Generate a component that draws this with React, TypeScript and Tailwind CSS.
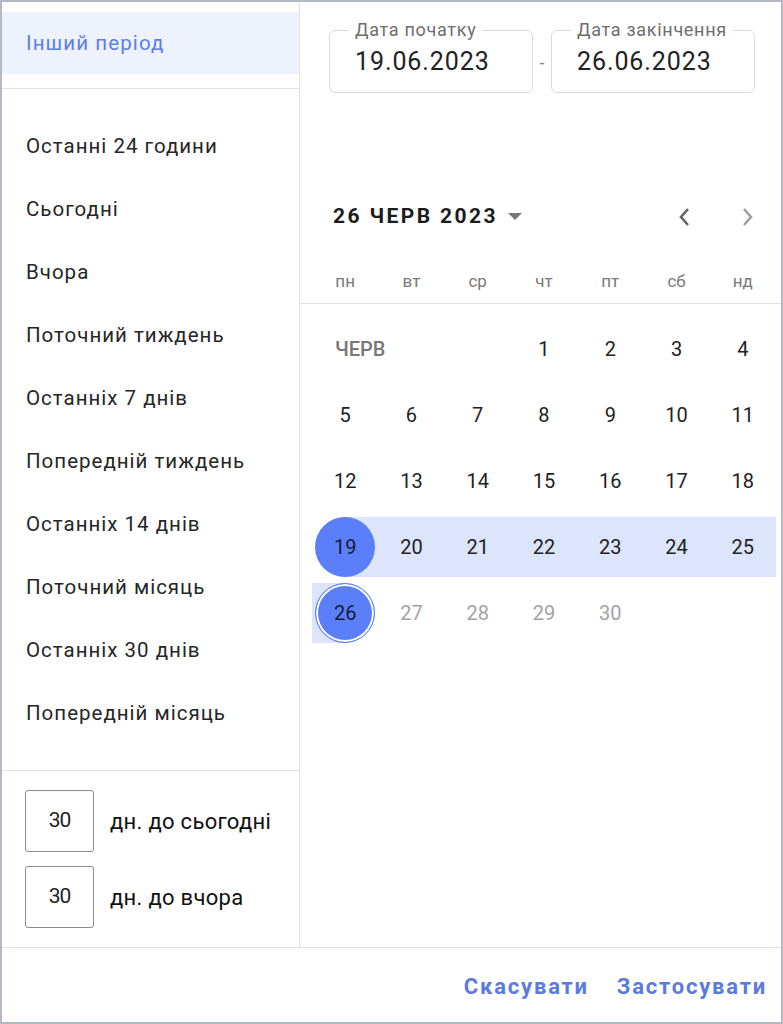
import React from 'react';

const presets = [
  'Останні 24 години',
  'Сьогодні',
  'Вчора',
  'Поточний тиждень',
  'Останніх 7 днів',
  'Попередній тиждень',
  'Останніх 14 днів',
  'Поточний місяць',
  'Останніх 30 днів',
  'Попередній місяць',
];

const weekdays = ['пн', 'вт', 'ср', 'чт', 'пт', 'сб', 'нд'];

type Day = { n: number; kind: 'plain' | 'start' | 'mid' | 'end' | 'off' };

const weeks: Day[][] = [
  [1, 2, 3, 4].map((n) => ({ n, kind: 'plain' as const })),
  [5, 6, 7, 8, 9, 10, 11].map((n) => ({ n, kind: 'plain' as const })),
  [12, 13, 14, 15, 16, 17, 18].map((n) => ({ n, kind: 'plain' as const })),
  [19, 20, 21, 22, 23, 24, 25].map((n) => ({ n, kind: n === 19 ? ('start' as const) : ('mid' as const) })),
  [26, 27, 28, 29, 30].map((n) => ({ n, kind: n === 26 ? ('end' as const) : ('off' as const) })),
];

function DayCell({ day }: { day: Day }) {
  const band =
    day.kind === 'mid'
      ? 'bg-[#dce5fc]'
      : day.kind === 'start'
      ? 'bg-[linear-gradient(to_right,transparent_50%,#dce5fc_50%)]'
      : day.kind === 'end'
      ? 'bg-[linear-gradient(to_right,#dce5fc_50%,transparent_50%)]'
      : '';
  return (
    <div className="h-[66px] flex items-center">
      <div className={`h-[60px] w-full flex items-center justify-center ${band}`}>
        {day.kind === 'start' && (
          <div className="w-[60px] h-[60px] rounded-full bg-[#5a7ff8] flex items-center justify-center text-[#161c3a]">
            {day.n}
          </div>
        )}
        {day.kind === 'end' && (
          <div className="w-[60px] h-[60px] rounded-full bg-[#5a7ff8] border-[1.5px] border-[#5a7ff8] shadow-[inset_0_0_0_2px_white] flex items-center justify-center text-[#161c3a]">
            {day.n}
          </div>
        )}
        {(day.kind === 'plain' || day.kind === 'mid') && <span className="text-[#222]">{day.n}</span>}
        {day.kind === 'off' && <span className="text-[#a3a3a3]">{day.n}</span>}
      </div>
    </div>
  );
}

function DateField({ label, value }: { label: string; value: string }) {
  return (
    <fieldset className="w-[204px] h-[73px] border border-[#dadada] rounded-[6px] pl-[19px] pr-2">
      <legend className="px-[6px] text-[18px] leading-[20px] text-[#6e6e6e] tracking-[0.7px]">{label}</legend>
      <div className="pl-[6px] pt-[7px] text-[25px] leading-[30px] text-[#222] tracking-[0.9px]">{value}</div>
    </fieldset>
  );
}

export default function App() {
  return (
    <div
      className="w-[783px] h-[1024px] border-2 border-[#b5b9c6] bg-white flex flex-col"
      style={{ fontFamily: 'Roboto, "Noto Sans", sans-serif' }}
    >
      <div className="flex flex-1 min-h-0">
        {/* presets */}
        <div className="w-[298px] border-r border-[#e2e2e2] flex flex-col">
          <div className="pt-[10px] pb-[14px] border-b border-[#e2e2e2]">
            <div className="h-[62px] bg-[#eef2fd] flex items-center pl-[24px] text-[20.5px] text-[#5b7fe6] tracking-[1.1px]">
              Інший період
            </div>
          </div>
          <div className="flex-1 pt-[26px]">
            {presets.map((p) => (
              <div key={p} className="h-[63px] flex items-center pl-[24px] text-[20.5px] text-[#262626] tracking-[1px]">
                {p}
              </div>
            ))}
          </div>
          <div className="border-t border-[#e2e2e2] px-[23px] pt-[19px] pb-[19px] flex flex-col gap-[14px]">
            {['дн. до сьогодні', 'дн. до вчора'].map((t) => (
              <div key={t} className="flex items-center gap-[16px]">
                <div className="w-[69px] h-[62px] border border-[#8a8a8a] rounded-[3px] flex items-center justify-center text-[21px] text-[#222] tracking-[-1px]">
                  30
                </div>
                <span className="text-[22px] text-[#111] tracking-[0.3px]">{t}</span>
              </div>
            ))}
          </div>
        </div>

        {/* calendar */}
        <div className="flex-1 flex flex-col">
          <div className="flex items-center pl-[29px] pt-[18px]">
            <DateField label="Дата початку" value="19.06.2023" />
            <span className="w-[18px] text-center text-[18px] text-[#888] mt-[12px]">-</span>
            <DateField label="Дата закінчення" value="26.06.2023" />
          </div>

          <div className="mt-[100px] h-[48px] flex items-center pl-[33px] pr-[26px]">
            <span className="text-[21px] font-bold text-[#1c1c1c] tracking-[2.4px]">26 ЧЕРВ 2023</span>
            <svg width="14" height="8" viewBox="0 0 14 8" className="ml-[10px]">
              <path d="M0 0 L14 0 L7 7 Z" fill="#777" />
            </svg>
            <div className="flex-1" />
            <svg width="14" height="22" viewBox="0 0 14 22" className="mr-[50px]">
              <path d="M11 3 L4 11 L11 19" stroke="#666" strokeWidth="2.6" fill="none" />
            </svg>
            <svg width="14" height="22" viewBox="0 0 14 22">
              <path d="M3 3 L10 11 L3 19" stroke="#a0a0a0" strokeWidth="2.6" fill="none" />
            </svg>
          </div>

          <div className="mt-[19px] h-[44px] border-b border-[#e2e2e2] pl-[12px] pr-[5px] grid grid-cols-7 items-center">
            {weekdays.map((w) => (
              <div key={w} className="text-center text-[17px] text-[#7a7a7a]">
                {w}
              </div>
            ))}
          </div>

          <div className="pt-[12px] pl-[12px] pr-[5px] grid grid-cols-7 text-[20px] text-center">
            <div className="col-span-3 h-[66px] flex items-center pl-[23px] text-[20px] font-medium text-[#777]">ЧЕРВ</div>
            {weeks.map((w) => w.map((d) => <DayCell key={d.n} day={d} />))}
          </div>
        </div>
      </div>

      <div className="h-[75px] border-t border-[#e2e2e2] flex items-center justify-end gap-[28px] pr-[14px] pt-[3px]">
        <button className="text-[22px] font-bold text-[#5b7be0] tracking-[1.8px]">Скасувати</button>
        <button className="text-[22px] font-bold text-[#5b7be0] tracking-[1.8px]">Застосувати</button>
      </div>
    </div>
  );
}
